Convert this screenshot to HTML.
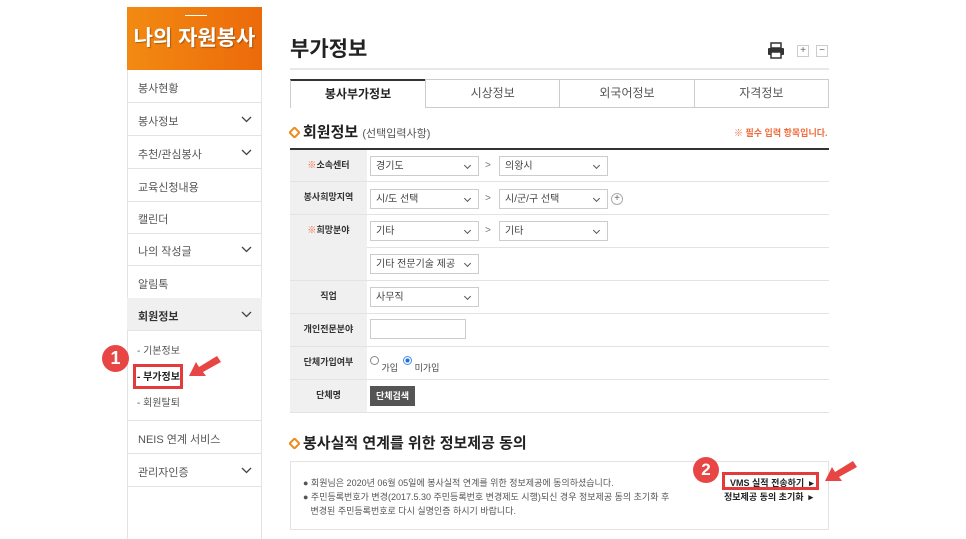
<!DOCTYPE html><html><head><meta charset="utf-8"><style>
*{box-sizing:border-box;margin:0;padding:0}
body{width:966px;height:539px;background:#fff;font-family:"Liberation Sans","Noto Sans CJK KR",sans-serif;position:relative;overflow:hidden;color:#333}
.a{position:absolute}
.side{left:127px;top:7px;width:135px;height:532px;border-left:1px solid #e3e3e3;border-right:1px solid #e3e3e3}
.hd{left:127px;top:7px;width:135px;height:63px;background:linear-gradient(90deg,#f28a12,#ec6a0a);color:#fff;font-size:21px;font-weight:bold;text-align:center;padding-top:15px;text-shadow:1px 1px 1px rgba(0,0,0,.3)}
.mi{position:absolute;left:127px;width:135px;height:33px;border-bottom:1px solid #e3e3e3;font-size:11px;color:#555;padding:10px 0 0 11px}
.mi svg{position:absolute;right:10px;top:13px}
.sel{font-size:10px;color:#444;border:1px solid #ccc;height:20px;padding:5px 5px 0;position:absolute;background:#fff;line-height:10px}
.sel:after{content:"";position:absolute;right:8px;top:6px;width:4px;height:4px;border-right:1px solid #555;border-bottom:1px solid #555;transform:rotate(45deg)}
.lb{position:absolute;left:290px;width:77px;background:#f0f0f0;font-size:9px;font-weight:bold;text-align:center;color:#333}
.row{position:absolute;left:290px;width:539px;border-bottom:1px solid #e3e3e3}
.gt{position:absolute;font-size:10px;color:#777}
</style></head><body>
<div class="a side"></div>
<div class="a hd"><div style="position:absolute;left:58px;top:8px;width:22px;height:1px;background:#fff"></div>나의 자원봉사</div>
<div class="mi" style="top:70px">봉사현황</div>
<div class="mi" style="top:103px">봉사정보<svg width="11" height="7"><path d="M1 1l4.5 4.5L10 1" stroke="#444" fill="none" stroke-width="1.3"/></svg></div>
<div class="mi" style="top:136px">추천/관심봉사<svg width="11" height="7"><path d="M1 1l4.5 4.5L10 1" stroke="#444" fill="none" stroke-width="1.3"/></svg></div>
<div class="mi" style="top:169px">교육신청내용</div>
<div class="mi" style="top:201px">캘린더</div>
<div class="mi" style="top:233px">나의 작성글<svg width="11" height="7"><path d="M1 1l4.5 4.5L10 1" stroke="#444" fill="none" stroke-width="1.3"/></svg></div>
<div class="mi" style="top:266px">알림톡</div>
<div class="mi" style="top:298px;background:#f0f0f0;font-weight:bold;color:#333">회원정보<svg width="11" height="7"><path d="M1 1l4.5 4.5L10 1" stroke="#444" fill="none" stroke-width="1.3"/></svg></div>
<div class="mi" style="top:331px;height:90px;font-size:10px;line-height:26px;padding-top:8px;padding-left:10px">- 기본정보<br><b style="color:#222">- 부가정보</b><br>- 회원탈퇴</div>
<div class="a" style="left:133px;top:364px;width:50px;height:25px;border:3px solid #e33b3b"></div>
<div class="a" style="left:102px;top:345px;width:27px;height:27px;border-radius:50%;background:#e84545;color:#fff;font-weight:bold;font-size:18px;text-align:center;line-height:27px">1</div>
<svg class="a" style="left:187px;top:352px" width="36" height="28"><path d="M2 24L9 10L12 15L30 4L34 10L16 20L19 24Z" fill="#e84545"/></svg>
<div class="mi" style="top:421px">NEIS 연계 서비스</div>
<div class="mi" style="top:454px">관리자인증<svg width="11" height="7"><path d="M1 1l4.5 4.5L10 1" stroke="#444" fill="none" stroke-width="1.3"/></svg></div>

<div class="a" style="left:290px;top:33px;font-size:21px;font-weight:bold;color:#222">부가정보</div>
<svg class="a" style="left:767px;top:42px" width="18" height="17"><rect x="4" y="1" width="10" height="5" fill="none" stroke="#333" stroke-width="1.5"/><rect x="1" y="6" width="16" height="7" rx="1" fill="#333"/><rect x="4" y="10" width="10" height="6" fill="#fff" stroke="#333" stroke-width="1.5"/></svg>
<div class="a" style="left:797px;top:45px;width:12px;height:12px;border:1px solid #ccc;font-size:10px;line-height:10px;text-align:center;color:#666">+</div>
<div class="a" style="left:816px;top:45px;width:12px;height:12px;border:1px solid #ccc;font-size:10px;line-height:10px;text-align:center;color:#666">−</div>
<div class="a" style="left:290px;top:68px;width:539px;height:2px;background:#e8e8e8"></div>
<div class="a" style="left:290px;top:79px;width:135px;height:29px;border-top:2px solid #333;border-left:1px solid #ccc;font-size:12px;font-weight:bold;text-align:center;line-height:27px;color:#222">봉사부가정보</div>
<div class="a" style="left:425px;top:79px;width:404px;height:29px;border-top:1px solid #ccc;border-bottom:1px solid #ccc;font-size:12px;color:#555;display:flex;text-align:center;line-height:27px"><div style="flex:1;border-left:1px solid #ccc">시상정보</div><div style="flex:1;border-left:1px solid #ccc">외국어정보</div><div style="flex:1;border-left:1px solid #ccc;border-right:1px solid #ccc">자격정보</div></div>
<div class="a" style="left:290px;top:121px;font-size:15px;font-weight:bold;color:#222"><span style="display:inline-block;width:9px;height:9px;border:2px solid #f08a1a;transform:rotate(45deg);border-radius:2px;margin-right:4px"></span>회원정보 <span style="font-size:11px;font-weight:normal;color:#555">(선택입력사항)</span></div>
<div class="a" style="left:734px;top:126px;font-size:9px;font-weight:bold;color:#f06a3a">※ 필수 입력 항목입니다.</div>
<div class="a" style="left:290px;top:148px;width:539px;height:2px;background:#333"></div>

<div class="lb" style="top:150px;height:32px;padding-top:8px"><span style="color:#f06a3a">※</span>소속센터</div>
<div class="lb" style="top:182px;height:33px;padding-top:8px">봉사희망지역</div>
<div class="lb" style="top:215px;height:66px;padding-top:8px"><span style="color:#f06a3a">※</span>희망분야</div>
<div class="lb" style="top:281px;height:33px;padding-top:8px">직업</div>
<div class="lb" style="top:314px;height:33px;padding-top:8px">개인전문분야</div>
<div class="lb" style="top:347px;height:33px;padding-top:8px">단체가입여부</div>
<div class="lb" style="top:380px;height:33px;padding-top:8px">단체명</div>
<div class="row" style="top:150px;height:32px"></div>
<div class="row" style="top:182px;height:33px"></div>
<div class="row" style="top:215px;height:33px;left:367px;width:462px"></div>
<div class="row" style="top:248px;height:33px"></div>
<div class="row" style="top:281px;height:33px"></div>
<div class="row" style="top:314px;height:33px"></div>
<div class="row" style="top:347px;height:33px"></div>
<div class="row" style="top:380px;height:33px"></div>

<div class="sel" style="left:370px;top:156px;width:109px">경기도</div><div class="gt" style="left:485px;top:160px">&gt;</div><div class="sel" style="left:499px;top:156px;width:109px">의왕시</div>
<div class="sel" style="left:370px;top:189px;width:109px">시/도 선택</div><div class="gt" style="left:485px;top:193px">&gt;</div><div class="sel" style="left:499px;top:189px;width:109px">시/군/구 선택</div>
<div class="a" style="left:611px;top:193px;width:12px;height:12px;border:1px solid #aaa;border-radius:50%;font-size:10px;line-height:10px;text-align:center;color:#666">+</div>
<div class="sel" style="left:370px;top:221px;width:109px">기타</div><div class="gt" style="left:485px;top:225px">&gt;</div><div class="sel" style="left:499px;top:221px;width:109px">기타</div>
<div class="sel" style="left:370px;top:254px;width:109px">기타 전문기술 제공</div>
<div class="sel" style="left:370px;top:287px;width:109px">사무직</div>
<div class="a" style="left:370px;top:319px;width:96px;height:20px;border:1px solid #ccc"></div>
<div class="a" style="left:370px;top:356px;font-size:9px;color:#444"><span style="display:inline-block;width:9px;height:9px;border:1px solid #888;border-radius:50%;vertical-align:top"></span><span style="position:relative;top:5px"> 가입</span> &nbsp;<span style="display:inline-block;width:9px;height:9px;border:1px solid #4a8ce8;border-radius:50%;background:radial-gradient(#1a6fe0 40%,#fff 45%);vertical-align:top"></span><span style="position:relative;top:5px"> 미가입</span></div>
<div class="a" style="left:370px;top:386px;width:45px;height:20px;background:#555;color:#fff;font-size:9px;font-weight:bold;text-align:center;line-height:20px">단체검색</div>

<div class="a" style="left:290px;top:432px;font-size:15px;font-weight:bold;color:#222"><span style="display:inline-block;width:9px;height:9px;border:2px solid #f08a1a;transform:rotate(45deg);border-radius:2px;margin-right:4px"></span>봉사실적 연계를 위한 정보제공 동의</div>
<div class="a" style="left:290px;top:461px;width:539px;height:69px;border:1px solid #e3e3e3"></div>
<div class="a" style="left:303px;top:476px;font-size:9px;color:#555;line-height:14px">● 회원님은 2020년 06월 05일에 봉사실적 연계를 위한 정보제공에 동의하셨습니다.<br>● 주민등록번호가 변경(2017.5.30 주민등록번호 변경제도 시행)되신 경우 정보제공 동의 초기화 후<br>&nbsp;&nbsp;&nbsp;변경된 주민등록번호로 다시 실명인증 하시기 바랍니다.</div>
<div class="a" style="left:722px;top:472px;width:97px;height:18px;border:3px solid #e33b3b"></div>
<div class="a" style="left:730px;top:476px;font-size:9px;font-weight:bold;color:#222">VMS 실적 전송하기 &nbsp;▸</div>
<div class="a" style="left:724px;top:490px;font-size:9px;font-weight:bold;color:#222">정보제공 동의 초기화 &nbsp;▸</div>
<div class="a" style="left:693px;top:457px;width:26px;height:26px;border-radius:50%;background:#e84545;color:#fff;font-weight:bold;font-size:17px;text-align:center;line-height:26px">2</div>
<svg class="a" style="left:823px;top:457px" width="36" height="28"><path d="M2 24L9 10L12 15L30 4L34 10L16 20L19 24Z" fill="#e84545"/></svg>
</body></html>
